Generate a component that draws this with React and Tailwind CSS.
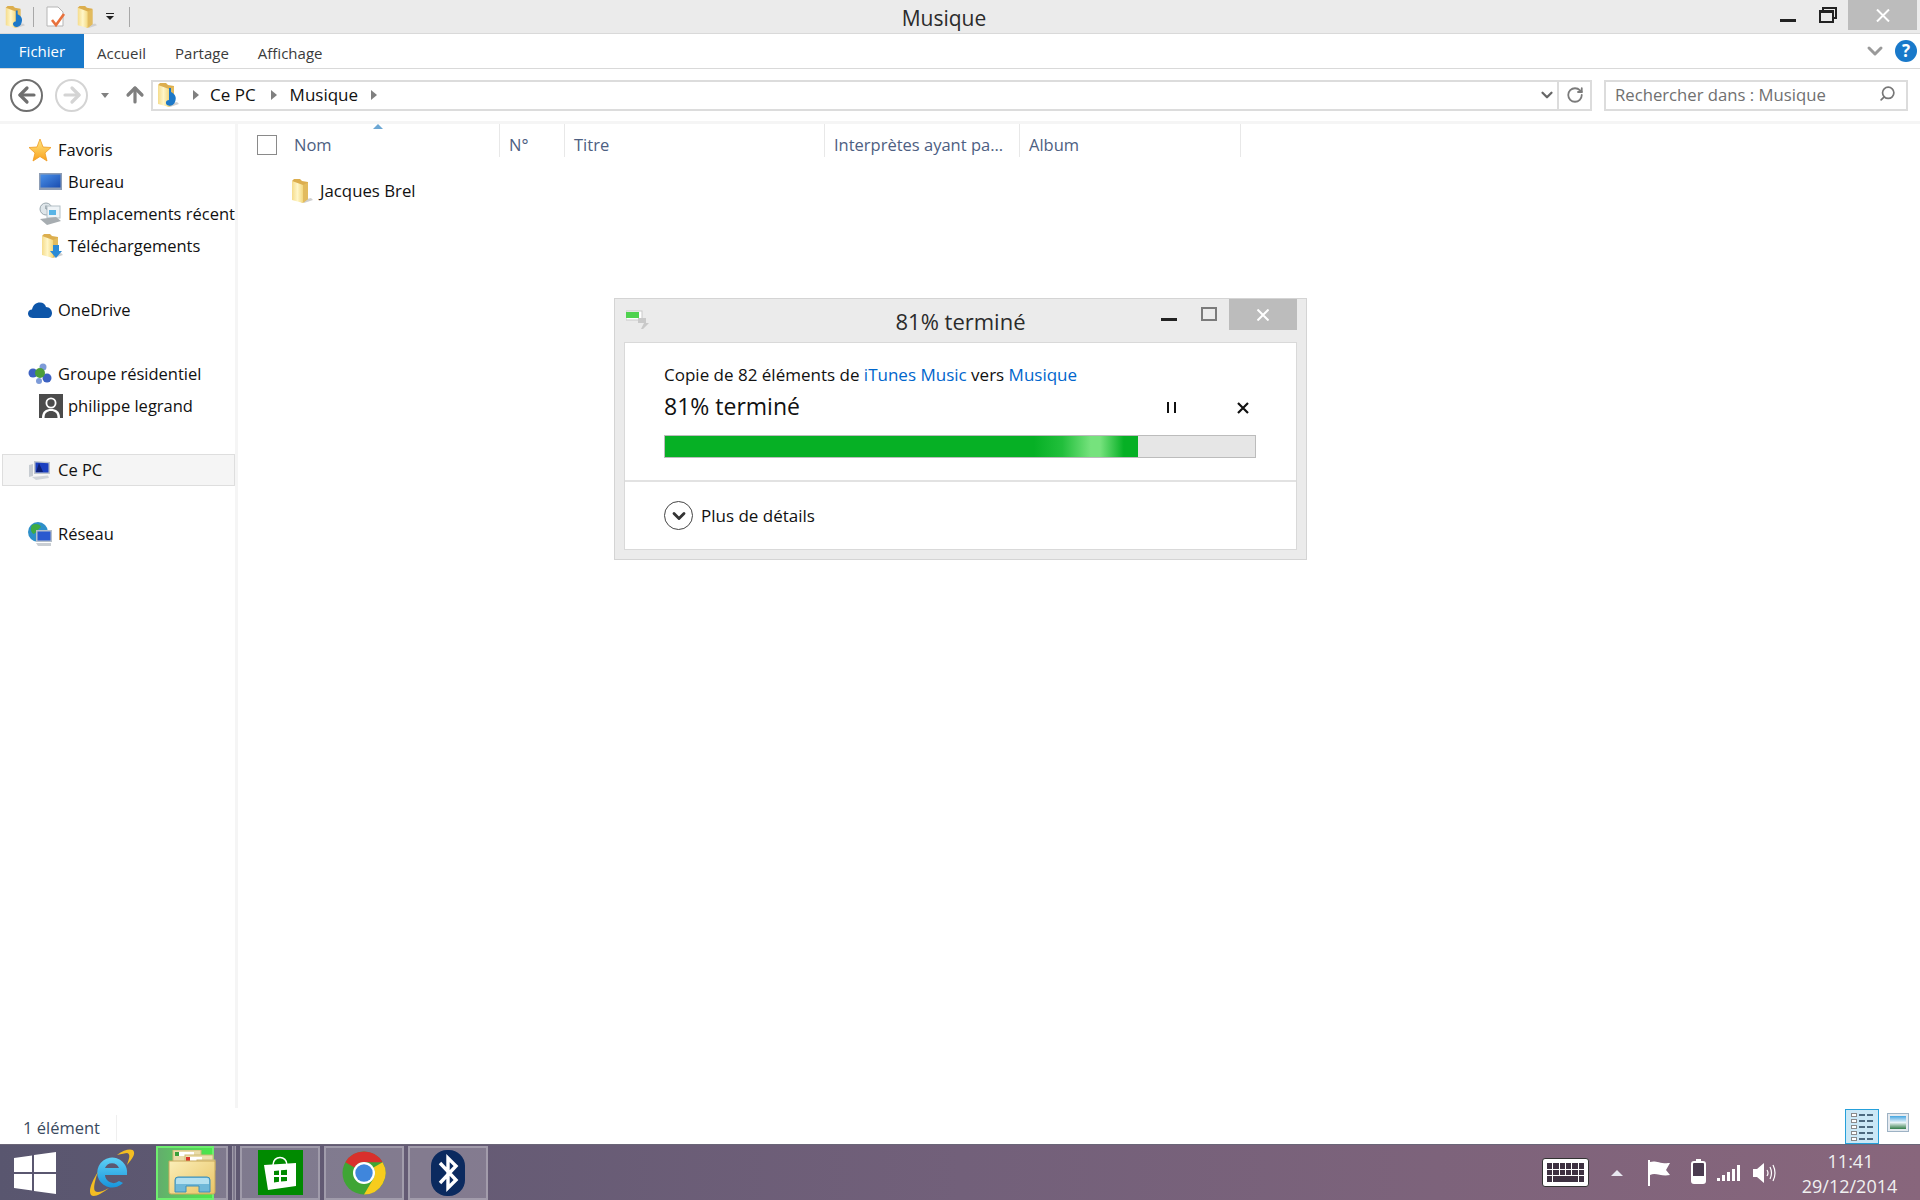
import { ChevronDown, Search, RotateCw, ArrowUp, ArrowLeft, ArrowRight } from "lucide-react";

const font = { fontFamily: '"Open Sans", "Noto Sans", sans-serif' };

function Folder({ size = 24, id, note, arrow }) {
  return (
    <svg width={size} height={size} viewBox="0 0 24 24" className="shrink-0">
      <defs>
        <linearGradient id={id} x1="0" y1="0" x2="1" y2="0">
          <stop offset="0" stopColor="#f5dc8c" />
          <stop offset="0.5" stopColor="#fff6c8" />
          <stop offset="1" stopColor="#f3d87f" />
        </linearGradient>
      </defs>
      <path d="M14 21 L22 19 L24 21 L15 24 Z" fill="#cfcfcf" />
      <path d="M3 2 L5 0 L11 0 L13 2 L19 3 V20 L13 24 Z" fill="#dcae4e" />
      <path d="M3 2 L14 6 V24 L3 21 Z" fill={`url(#${id})`} />
      <path d="M14 6 L19 3.5 V20 L14 24 Z" fill="#e2bb5e" />
      {note && <path d="M14 5 H16 V9 C20 11 22 14 20 19 C19 22 15 24 12 22 C10 20 11 17 14 17 Z" fill="#1c78c8" />}
      {arrow && <path d="M14 11 H20 V17 H23 L17 24 L11 17 H14 Z" fill="#2a8ad6" />}
    </svg>
  );
}

function Star() {
  return (
    <svg width="24" height="24" viewBox="0 0 24 24" className="shrink-0">
      <defs>
        <linearGradient id="star" x1="0" y1="0" x2="0" y2="1">
          <stop offset="0" stopColor="#ffe884" />
          <stop offset="1" stopColor="#f9a11d" />
        </linearGradient>
      </defs>
      <path d="M12 1 L15 9 L23 9.5 L17 15 L19 23 L12 18.5 L5 23 L7 15 L1 9.5 L9 9 Z" fill="url(#star)" stroke="#ef9a22" strokeWidth="0.8" />
    </svg>
  );
}

function Monitor() {
  return (
    <svg width="24" height="24" viewBox="0 0 24 24" className="shrink-0">
      <defs>
        <linearGradient id="desk" x1="0" y1="0" x2="1" y2="1">
          <stop offset="0" stopColor="#4a90e8" />
          <stop offset="1" stopColor="#1a4db0" />
        </linearGradient>
      </defs>
      <rect x="0" y="3" width="23" height="17" fill="#8d9db5" />
      <rect x="1.5" y="4.5" width="20" height="13" fill="url(#desk)" />
    </svg>
  );
}

function Recent() {
  return (
    <svg width="24" height="24" viewBox="0 0 24 24" className="shrink-0">
      <circle cx="7" cy="7" r="6" fill="#dfe6ea" stroke="#9aa7ae" />
      <path d="M7 3.5 V7 H10" stroke="#6d7a82" fill="none" />
      <rect x="8" y="4" width="13" height="12" fill="#eef3f6" stroke="#b4c0c6" />
      <rect x="10" y="8" width="7" height="5" fill="#58b4e6" />
      <path d="M1 17 L17 15 L22 19 L8 23 Z" fill="#a7adb1" />
    </svg>
  );
}

function OneDrive() {
  return (
    <svg width="24" height="16" viewBox="0 0 24 16" className="shrink-0">
      <path d="M5 16 C1 16 0 13 0 11.5 C0 9 2 7.5 4 7.5 C5 3 8 0.5 12 0.5 C15 0.5 17.5 2.5 18 5 C21.5 5 24 8 24 11 C24 14 22 16 19.5 16 Z" fill="#0d55a8" />
    </svg>
  );
}

function Homegroup() {
  return (
    <svg width="24" height="24" viewBox="0 0 24 24" className="shrink-0">
      <circle cx="15" cy="5" r="3.5" fill="#7d9bd8" />
      <circle cx="5" cy="11" r="4.5" fill="#3d62c2" />
      <circle cx="19" cy="16" r="4.5" fill="#3d62c2" />
      <circle cx="11" cy="19" r="3" fill="#7d9bd8" />
      <circle cx="12" cy="11" r="5" fill="#4c9e3a" />
    </svg>
  );
}

function UserPic() {
  return (
    <svg width="24" height="24" viewBox="0 0 24 24" className="shrink-0">
      <rect width="24" height="24" fill="#4b4b4b" />
      <circle cx="12" cy="9" r="5.5" fill="#fff" />
      <path d="M3 24 C3 17 7 15 12 15 C17 15 21 17 21 24 Z" fill="#fff" />
      <circle cx="12" cy="9" r="3.7" fill="#4b4b4b" />
      <path d="M5.5 24 C5.5 19 8 17 12 17 C16 17 18.5 19 18.5 24 Z" fill="#4b4b4b" />
    </svg>
  );
}

function ThisPc() {
  return (
    <svg width="24" height="24" viewBox="0 0 24 24" className="shrink-0">
      <path d="M1 7 L5 6 V18 L1 19 Z" fill="#c7ccd1" />
      <path d="M6 3 L22 4 V16 L6 16 Z" fill="#bcc3cb" />
      <path d="M7.5 4.5 L20.5 5.3 V14.5 L7.5 14.5 Z" fill="#1a3fc0" />
      <path d="M11 5 L15 14 H8 Z" fill="#0d1f75" />
      <path d="M4 19 L20 17.5 L21 20 L8 22 Z" fill="#d0d4d8" />
    </svg>
  );
}

function Network() {
  return (
    <svg width="24" height="24" viewBox="0 0 24 24" className="shrink-0">
      <circle cx="10" cy="10" r="10" fill="#2e8fc9" />
      <path d="M4 3 C8 1 12 2 13 5 C10 7 9 10 6 12 C3 11 2 7 4 3 Z" fill="#3eab43" />
      <rect x="8" y="8" width="16" height="12" fill="#b6c0ca" />
      <rect x="9.5" y="9.5" width="13" height="9" fill="#2b59cf" />
      <path d="M8 21 L23 21 L23 24 L10 24 Z" fill="#c9ced3" />
    </svg>
  );
}

function NavItem({ icon, children, child, active, className = "" }) {
  return (
    <div className={`h-8 flex items-center whitespace-nowrap overflow-hidden text-[16.5px] text-[#111] ${child ? "pl-[39px] gap-[5px]" : "gap-[6px]"} ${active ? "bg-[#f5f5f5] border border-[#dedede] ml-[2px] pl-[25px] gap-[4px]" : child ? "" : "pl-[28px]"} ${className}`}>
      <div className="w-6 flex justify-center shrink-0">{icon}</div>
      <span>{children}</span>
    </div>
  );
}

function Column({ width, label }) {
  return (
    <div className={`h-[33px] shrink-0 flex items-center pl-[9px] pt-[9px] border-r border-[#e8e8e8] text-[16.5px] text-[#4d6082] whitespace-nowrap ${width}`}>
      {label}
    </div>
  );
}

function Crumb() {
  return <div className="w-0 h-0 border-y-[5px] border-y-transparent border-l-[6px] border-l-[#808080]" />;
}

function TaskButton({ children, className = "" }) {
  return (
    <div className={`h-[54px] w-20 flex items-center justify-center bg-white/20 border-2 border-white/25 ${className}`}>
      {children}
    </div>
  );
}

function ExplorerIcon() {
  return (
    <svg width="48" height="46" viewBox="0 0 48 46">
      <defs>
        <linearGradient id="expl" x1="0" y1="0" x2="1" y2="1">
          <stop offset="0" stopColor="#fbeeb8" />
          <stop offset="1" stopColor="#e9c464" />
        </linearGradient>
      </defs>
      <rect x="5" y="0" width="28" height="16" fill="#e9dca8" stroke="#cdb975" />
      <rect x="8" y="2" width="18" height="4" fill="#fff" />
      <rect x="7" y="2" width="4" height="4" fill="#3aa03a" />
      <rect x="17" y="5" width="28" height="12" fill="#ecdfae" stroke="#cdb975" />
      <rect x="20" y="7" width="14" height="4" fill="#fff" />
      <rect x="18" y="7" width="4" height="4" fill="#d9352a" />
      <rect x="29" y="10" width="18" height="10" fill="#efe3b5" stroke="#cdb975" />
      <rect x="32" y="11" width="12" height="4" fill="#fff" />
      <rect x="30" y="11" width="4" height="4" fill="#2f7fd0" />
      <path d="M1 11 H47 V42 Q47 44 45 44 H3 Q1 44 1 42 Z" fill="url(#expl)" stroke="#c9a95b" />
      <path d="M7 42 V30 Q7 27 10 27 H39 Q42 27 42 30 V42 H31 V36 H18 V42 Z" fill="#6fb8d8" stroke="#3f8fb8" />
      <path d="M8 34 V30 Q8 28 10 28 H39 Q41 28 41 30 V34 Z" fill="#b3e0ef" />
    </svg>
  );
}

function Chrome() {
  return (
    <svg width="44" height="44" viewBox="0 0 44 44">
      <circle cx="22" cy="22" r="21.5" fill="#3fa535" />
      <path d="M22 0.5 A21.5 21.5 0 0 1 40.6 11.2 L22 11.2 A11 11 0 0 0 12.5 16.5 L3.4 11.2 A21.5 21.5 0 0 1 22 0.5 Z" fill="#d9302c" />
      <path d="M40.6 11.2 A21.5 21.5 0 0 1 22 43.5 L31.5 27.5 A11 11 0 0 0 31.5 16.5 Z" fill="#f7cc1d" />
      <circle cx="22" cy="22" r="11" fill="#fff" />
      <circle cx="22" cy="22" r="8.7" fill="#3f86dc" />
    </svg>
  );
}

function Bluetooth() {
  return (
    <svg width="34" height="46" viewBox="0 0 34 46">
      <rect x="0" y="0" width="34" height="46" rx="16" fill="#0b2a5f" />
      <path d="M9 13 L25 30 L17 38 V8 L25 16 L9 33" fill="none" stroke="#fff" strokeWidth="3.4" />
    </svg>
  );
}

function Store() {
  return (
    <div className="w-[45px] h-[45px] bg-[#008a00] flex items-center justify-center">
      <svg width="36" height="38" viewBox="0 0 36 38">
        <path d="M11 11 C11 1 25 1 25 11" fill="none" stroke="#fff" strokeWidth="1.5" />
        <path d="M2 11 L34 9 V32 L6 36 Z" fill="#fff" />
        <path d="M12 17 L17 16.5 V21 H12 Z M19 16.3 L25 15.8 V21 H19 Z M12 23 H17 V27.8 L12 28.4 Z M19 23 H25 V27 L19 27.6 Z" fill="#008a00" />
      </svg>
    </div>
  );
}

function StartLogo() {
  return (
    <svg width="42" height="42" viewBox="0 0 42 42">
      <path d="M0 6 L18 3.4 V20 H0 Z M20 3 L42 0 V20 H20 Z M0 22 H18 V38.6 L0 36 Z M20 22 H42 V42 L20 39 Z" fill="#fff" />
    </svg>
  );
}

function IeLogo() {
  return (
    <svg width="46" height="50" viewBox="0 0 46 50">
      <defs>
        <linearGradient id="ie" x1="0" y1="0" x2="0" y2="1">
          <stop offset="0" stopColor="#5fd0f5" />
          <stop offset="1" stopColor="#1795dc" />
        </linearGradient>
      </defs>
      <path d="M35 36 A15 15 0 1 1 39 28 H17 A8.5 8.5 0 0 0 31 34 Z M17 21 H31 A7.5 7.5 0 0 0 17 21 Z" fill="url(#ie)" fillRule="evenodd" transform="translate(-1 -1)" />
      <path d="M28 7 C36 1 44 0 45 4 C46 8 41 13 38 17 C40 11 42 6 38 5 C36 5 33 6 28 7 Z" fill="#f3bd22" />
      <path d="M9 24 C3 33 -1 43 2 47 C5 50 12 46 20 40 C13 44 8 45 6 43 C4 41 6 32 9 24 Z" fill="#f3bd22" />
    </svg>
  );
}

export default function App() {
  return (
    <div style={font} className="relative w-full h-[1200px] bg-white overflow-hidden flex flex-col">
      {/* title bar */}
      <div className="h-[34px] shrink-0 bg-[#ebebeb] border-b border-[#d9d9d9] relative flex items-center pl-[3px]">
        <Folder id="qa1" size={22} note />
        <div className="w-px h-5 bg-[#a8a8a8] ml-[8px]" />
        <svg width="20" height="22" viewBox="0 0 20 22" className="ml-[12px]">
          <path d="M1 1 H12 L17 6 V20 H1 Z" fill="#fff" stroke="#b5b5b5" />
          <path d="M6 14 L10 19 L18 8" fill="none" stroke="#e8713c" strokeWidth="2.6" />
        </svg>
        <div className="ml-[9px]"><Folder id="qa2" size={22} /></div>
        <div className="ml-[9px] flex flex-col items-center gap-[2px]">
          <div className="w-[8px] h-px bg-[#222]" />
          <div className="w-0 h-0 border-x-[4px] border-x-transparent border-t-[4px] border-t-[#222]" />
        </div>
        <div className="w-px h-5 bg-[#a8a8a8] ml-[15px]" />
        <div className="absolute left-0 right-0 top-0 h-[33px] pt-[5px] flex items-center justify-center text-[21px] text-[#2b2b2b] pr-[32px]">Musique</div>
        <div className="absolute right-[3px] top-0 flex items-start">
          <div className="w-4 h-[3px] bg-[#222] mt-[19px]" />
          <div className="relative w-[18px] h-[16px] ml-[23px] mt-[7px]">
            <div className="absolute right-0 top-0 w-[15px] h-[12px] border-2 border-[#222]" />
            <div className="absolute left-0 bottom-0 w-[15px] h-[13px] border-2 border-t-[3px] border-[#222] bg-[#ebebeb]" />
          </div>
          <div className="w-[69px] h-[30px] bg-[#bcbcbc] ml-[11px] flex items-center justify-center">
            <svg width="14" height="13" viewBox="0 0 14 13"><path d="M1 0.5 L13 12.5 M13 0.5 L1 12.5" stroke="#fff" strokeWidth="2" /></svg>
          </div>
        </div>
      </div>

      {/* ribbon tabs */}
      <div className="h-[35px] shrink-0 border-b border-[#d9d9d9] flex items-stretch text-[15px] text-[#3b3b3b]">
        <div className="w-[84px] bg-[#1979ca] text-white flex items-center justify-center">Fichier</div>
        <div className="ml-[13px] flex items-center pt-[5px]">Accueil</div>
        <div className="ml-[29px] flex items-center pt-[5px]">Partage</div>
        <div className="ml-[29px] flex items-center pt-[5px]">Affichage</div>
        <div className="ml-auto flex items-center gap-[8px] pr-[3px]">
          <ChevronDown size={24} strokeWidth={3} className="text-[#9a9a9a]" />
          <div className="w-[22px] h-[22px] rounded-full bg-[#1979ca] text-white font-bold text-[17px] flex items-center justify-center">?</div>
        </div>
      </div>

      {/* address row */}
      <div className="h-[52px] shrink-0 flex items-center pl-[10px] pr-3">
        <div className="w-[33px] h-[33px] rounded-full border-2 border-[#6f6f6f] flex items-center justify-center">
          <ArrowLeft size={24} strokeWidth={3.2} className="text-[#6f6f6f]" />
        </div>
        <div className="w-[33px] h-[33px] rounded-full border-2 border-[#d4d4d4] flex items-center justify-center ml-[12px]">
          <ArrowRight size={24} strokeWidth={3.2} className="text-[#d4d4d4]" />
        </div>
        <div className="w-0 h-0 border-x-[4px] border-x-transparent border-t-[5px] border-t-[#808080] ml-[13px]" />
        <ArrowUp size={24} strokeWidth={3.2} className="text-[#7f7f7f] ml-[14px]" />
        <div className="h-[31px] flex-1 ml-[4px] border-2 border-[#dcdcdc] flex items-center pl-[2px] text-[17px] text-[#111]">
          <Folder id="addr" size={24} note />
          <div className="ml-[14px]"><Crumb /></div>
          <span className="ml-[11px]">Ce PC</span>
          <div className="ml-[15px]"><Crumb /></div>
          <span className="ml-[13px]">Musique</span>
          <div className="ml-[13px]"><Crumb /></div>
          <div className="ml-auto h-full flex items-center">
            <ChevronDown size={18} strokeWidth={3} className="text-[#666]" />
            <div className="w-[33px] h-full border-l-2 border-[#dcdcdc] flex items-center justify-center ml-[1px]">
              <RotateCw size={18} strokeWidth={2.4} className="text-[#7b7b7b]" />
            </div>
          </div>
        </div>
        <div className="h-[31px] w-[304px] ml-[12px] border-2 border-[#dcdcdc] flex items-center pl-[9px] pr-[10px] text-[16.7px] text-[#707070]">
          <span>Rechercher dans : Musique</span>
          <Search size={17} strokeWidth={2.4} className="ml-auto mb-[3px] text-[#777] -scale-x-100" />
        </div>
      </div>

      <div className="h-[3px] shrink-0 bg-[#f5f5f5]" />

      {/* main area */}
      <div className="flex-1 flex min-h-0">
        <div className="w-[238px] shrink-0 border-r-[3px] border-[#f5f5f5] pt-[10px] overflow-hidden">
          <NavItem icon={<Star />}>Favoris</NavItem>
          <NavItem child icon={<Monitor />}>Bureau</NavItem>
          <NavItem child icon={<Recent />}>Emplacements récents</NavItem>
          <NavItem child icon={<Folder id="dl" arrow />}>Téléchargements</NavItem>
          <NavItem icon={<OneDrive />} className="mt-8">OneDrive</NavItem>
          <NavItem icon={<Homegroup />} className="mt-8">Groupe résidentiel</NavItem>
          <NavItem child icon={<UserPic />}>philippe legrand</NavItem>
          <NavItem active icon={<ThisPc />} className="mt-8">Ce PC</NavItem>
          <NavItem icon={<Network />} className="mt-8">Réseau</NavItem>
        </div>

        <div className="flex-1 min-w-0">
          <div className="flex">
            <div className="relative w-[262px] h-[33px] shrink-0 flex items-center border-r border-[#e8e8e8] pl-[19px] pt-[9px]">
              <div className="w-5 h-5 border border-[#8a8a8a]" />
              <span className="ml-[17px] text-[16.5px] text-[#4d6082]">Nom</span>
              <div className="absolute left-[135px] top-0 w-0 h-0 border-x-[5px] border-x-transparent border-b-[5px] border-b-[#6ca7d4]" />
            </div>
            <Column width="w-[65px]" label="N°" />
            <Column width="w-[260px]" label="Titre" />
            <Column width="w-[195px]" label="Interprètes ayant pa..." />
            <Column width="w-[221px]" label="Album" />
          </div>
          <div className="mt-[18px] ml-[51px] flex items-center h-8 text-[16.8px] text-[#111]">
            <Folder id="brel" />
            <span className="ml-[7px]">Jacques Brel</span>
          </div>
        </div>
      </div>

      {/* status bar */}
      <div className="h-[36px] shrink-0 flex items-center text-[16.5px] text-[#3a4a60] relative">
        <div className="pl-[23px] pr-[16px] h-[26px] mt-[4px] border-r border-[#efefef] flex items-center">1 élément</div>
        <div className="ml-auto mr-[12px] flex items-center gap-[9px] self-end">
          <div className="w-[34px] h-[35px] bg-[#cbe8f6] border border-[#26a0da] flex flex-col justify-center gap-[2px] items-center">
            {[0, 1, 2, 3, 4].map((i) => (
              <div key={i} className="flex items-center gap-[2px]">
                <div className="w-[6px] h-[4px] bg-white border border-[#8a8a8a]" />
                <div className="w-[6px] h-[2px] bg-[#4d6a80]" />
                <div className="w-[6px] h-[2px] bg-[#4d6a80]" />
              </div>
            ))}
          </div>
          <div className="w-[20px] h-[17px] border-2 border-[#e4eaf0] outline outline-[#9db2c4] bg-linear-to-b from-[#3fa5e0] via-[#e8f4f8] to-[#2f7d4a] mb-[9px]" />
        </div>
      </div>

      {/* taskbar */}
      <div className="h-[56px] shrink-0 bg-linear-to-r from-[#59566f] via-[#72607a] to-[#88667c] flex items-center text-white border-t border-[#6b6678]">
        <div className="ml-[14px]"><StartLogo /></div>
        <div className="ml-[33px]"><IeLogo /></div>
        <div className="ml-[21px] relative h-[54px] w-[72px] bg-white/20 border-2 border-white/25 flex items-center justify-center">
          <div className="absolute left-[-2px] top-[-2px] h-[54px] w-[58px] bg-linear-to-r from-[#63ad6c] to-[#48e848] border-2 border-[#6fee6f]" />
          <div className="relative"><ExplorerIcon /></div>
        </div>
        <div className="w-[4px] h-[54px] ml-[4px] bg-white/20 border-x border-white/25" />
        <TaskButton className="ml-[4px]"><Store /></TaskButton>
        <TaskButton className="ml-[4px]"><Chrome /></TaskButton>
        <TaskButton className="ml-[4px]"><Bluetooth /></TaskButton>

        <div className="ml-auto flex items-center">
          <div className="w-[47px] h-[29px] bg-white rounded-[3px] border border-[#333] p-[4px] grid grid-cols-6 gap-[1px]">
            {Array.from({ length: 12 }).map((_, i) => <div key={i} className="bg-[#3d3040]" />)}
            <div className="bg-[#3d3040]" />
            <div className="col-span-4 bg-[#3d3040]" />
            <div className="bg-[#3d3040]" />
          </div>
          <div className="ml-[22px] w-0 h-0 border-x-[6px] border-x-transparent border-b-[6px] border-b-[#e8e8f0]" />
          <svg width="24" height="26" viewBox="0 0 24 26" className="ml-[24px]">
            <path d="M2 0 V26" stroke="#fff" strokeWidth="2" />
            <path d="M3 2 C9 0 12 4 23 3 L19 10 L23 15 C14 17 9 12 3 15 Z" fill="#fff" />
          </svg>
          <div className="ml-[20px] relative w-[15px] h-[23px] border-2 border-white rounded-[3px] bg-[#4b3b50] flex items-end">
            <div className="absolute -top-[4px] left-[3px] w-[5px] h-[3px] bg-white" />
            <div className="w-full h-[6px] bg-white" />
          </div>
          <div className="ml-[11px] flex items-end gap-[2px] h-[17px]">
            <div className="w-[3px] h-[3px] bg-white" />
            <div className="w-[3px] h-[6px] bg-white" />
            <div className="w-[3px] h-[9px] bg-white" />
            <div className="w-[3px] h-[12px] bg-white" />
            <div className="w-[3px] h-[16px] bg-white" />
          </div>
          <svg width="24" height="22" viewBox="0 0 24 22" className="ml-[12px]">
            <path d="M1 7 H5 L12 1 V21 L5 15 H1 Z" fill="#fff" />
            <path d="M15 8 Q17 11 15 14 M18 5 Q21 11 18 17 M21 3 Q25 11 21 19" fill="none" stroke="#fff" strokeWidth="1.2" />
          </svg>
          <div className="w-[115px] ml-[16px] mr-[13px] pt-[3px] text-center text-[18px] leading-[25px] text-[#f0f0f0]">
            <div className="pl-[2px]">11:41</div>
            <div className="whitespace-nowrap">29/12/2014</div>
          </div>
        </div>
      </div>

      {/* copy dialog */}
      <div className="absolute left-[614px] top-[298px] w-[693px] h-[262px] bg-[#ebebeb] border border-[#d4d4d4] flex flex-col">
        <div className="h-[43px] shrink-0 relative flex items-center justify-center pt-[1px] text-[22px] text-[#2b2b2b]">
          <svg width="24" height="20" viewBox="0 0 24 20" className="absolute left-[11px] top-[11px]">
            <rect x="0" y="1" width="16" height="9" fill="#fff" stroke="#c9c9c9" />
            <rect x="0" y="2" width="13" height="6" fill="#4fd24f" />
            <path d="M12 8 H20 V13 H23 L17 19 L15 19 L18 13 H12 Z" fill="#c9c9c9" />
          </svg>
          <span>81% terminé</span>
          <div className="absolute right-[9px] top-0 flex items-start">
            <div className="w-[16px] h-[3px] bg-[#222] mt-[19px]" />
            <div className="w-[16px] h-[14px] border-2 border-[#7b7b7b] ml-[24px] mt-[8px]" />
            <div className="w-[68px] h-[31px] ml-[12px] bg-[#bcbcbc] flex items-center justify-center">
              <svg width="12" height="12" viewBox="0 0 12 12"><path d="M0.5 0.5 L11.5 11.5 M11.5 0.5 L0.5 11.5" stroke="#fff" strokeWidth="2" /></svg>
            </div>
          </div>
        </div>
        <div className="ml-[9px] mr-[9px] bg-white border border-[#d9d9d9] flex flex-col h-[208px]">
          <div className="h-[139px] shrink-0 border-b-2 border-[#e2e2e2] pl-[39px] pr-[40px] pt-[20px]">
            <div className="text-[17px] leading-[24px] text-[#111] whitespace-nowrap">
              Copie de 82 éléments de <span className="text-[#0066cc]">iTunes Music</span> vers <span className="text-[#0066cc]">Musique</span>
            </div>
            <div className="flex items-center h-[36px] mt-[1px] text-[23px] text-[#111]">
              <span>81% terminé</span>
              <div className="ml-auto flex gap-[5px] mr-[61px] mt-[3px]">
                <div className="w-[2px] h-[11px] bg-[#111]" />
                <div className="w-[2px] h-[11px] bg-[#111]" />
              </div>
              <svg width="12" height="12" viewBox="0 0 12 12" className="mr-[7px] mt-[3px]"><path d="M1 1 L11 11 M11 1 L1 11" stroke="#111" strokeWidth="2.2" /></svg>
            </div>
            <div className="mt-[11px] h-[23px] bg-[#e6e6e6] border border-[#bcbcbc]">
              <div className="h-full w-[80.2%] bg-[linear-gradient(90deg,#06b025_0%,#06b025_78%,#22bf3c_84%,#76e27d_90%,#76e27d_92%,#06b025_97%)]" />
            </div>
          </div>
          <div className="flex-1 flex items-center pl-[39px] text-[17px] text-[#111]">
            <div className="w-[29px] h-[29px] rounded-full border border-[#444] flex items-center justify-center">
              <ChevronDown size={20} strokeWidth={3.4} className="text-[#333]" />
            </div>
            <span className="ml-[8px]">Plus de détails</span>
          </div>
        </div>
      </div>
    </div>
  );
}
